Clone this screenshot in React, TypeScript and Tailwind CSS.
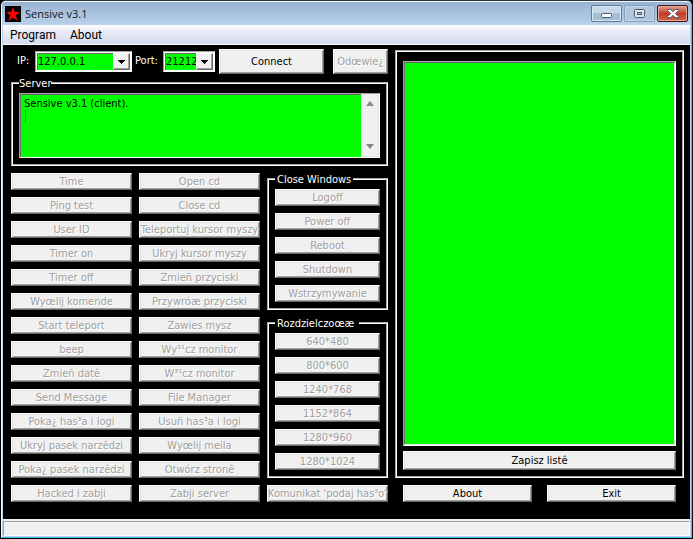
import type { ReactNode } from 'react';

const leftColumn = [
  'Time', 'Ping test', 'User ID', 'Timer on', 'Timer off', 'Wyœlij komende', 'Start teleport',
  'beep', 'Zmieñ datê', 'Send Message', 'Poka¿ has³a i logi', 'Ukryj pasek narzêdzi',
  'Poka¿ pasek narzêdzi', 'Hacked i zabji',
];
const middleColumn = [
  'Open cd', 'Close cd', 'Teleportuj kursor myszy', 'Ukryj kursor myszy', 'Zmieñ przyciski',
  'Przywróæ przyciski', 'Zawies mysz', 'Wy³¹cz monitor', 'W³¹cz monitor', 'File Manager',
  'Usuñ has³a i logi', 'Wyœlij meila', 'Otwórz stronê', 'Zabji server',
];
const closeActions = ['Logoff', 'Power off', 'Reboot', 'Shutdown', 'Wstrzymywanie'];
const resolutions = ['640*480', '800*600', '1240*768', '1152*864', '1280*960', '1280*1024'];

function Btn({ children, className = 'h-[17px]', disabled = false }: { children: ReactNode; className?: string; disabled?: boolean }) {
  return (
    <button
      type="button"
      disabled={disabled}
      className={`flex items-center justify-center whitespace-nowrap border border-t-white border-l-white border-r-[#696969] border-b-[#696969] bg-[#f0f0f0] pt-px leading-[14px] text-black shadow-[inset_1px_1px_#e3e3e3,inset_-1px_-1px_#a0a0a0] disabled:text-[#a0a0a0] disabled:[text-shadow:1px_1px_#fff] ${className}`}
    >
      {children}
    </button>
  );
}

function ButtonColumn({ labels }: { labels: string[] }) {
  return (
    <div className="flex flex-col gap-[7px]">
      {labels.map((label) => (
        <Btn key={label} disabled>{label}</Btn>
      ))}
    </div>
  );
}

function Group({ title, legendClass = 'px-[2px]', children }: { title: string; legendClass?: string; children: ReactNode }) {
  return (
    <fieldset className="min-w-0 border-2 border-white px-1.5 pt-1 pb-1.5 [border-style:groove]">
      <legend className={`h-3 whitespace-pre leading-[14px] text-white ${legendClass}`}>{title}</legend>
      {children}
    </fieldset>
  );
}

const sunken = 'border border-t-[#a0a0a0] border-l-[#a0a0a0] border-r-white border-b-white';

function Combo({ id, value, className }: { id: string; value: string; className: string }) {
  return (
    <div className={`relative flex h-[21px] bg-white p-px ${sunken} ${className}`}>
      <select id={id} defaultValue={value} className="w-full appearance-none border-t border-l border-[#696969] bg-[#00ff00] text-black outline-none">
        <option>{value}</option>
      </select>
      <span className="pointer-events-none absolute top-px right-px flex h-[17px] w-[17px] items-center justify-center border border-t-white border-l-white border-r-[#696969] border-b-[#696969] bg-[#f0f0f0] shadow-[inset_-1px_-1px_#a0a0a0]">
        <svg width="7" height="4" viewBox="0 0 7 4" shapeRendering="crispEdges"><path d="M0 0h7v1H6v1H5v1H4v1H3V3H2V2H1V1H0z" /></svg>
      </span>
    </div>
  );
}

export default function App() {
  return (
    <div className="bg-black font-['DejaVu_Sans_Condensed','DejaVu_Sans',sans-serif] text-[11px]">
      <div className="rounded-t-[6px] border border-t-[#30343c] border-r-[#111] border-b-black border-l-black bg-[#b9d1ea]">
        <div className="rounded-t-[5px] border border-t-[#eef5fc] border-r-[#3cc0ea] border-b-[#3cc0ea] border-l-white">
          <header className="flex h-[23px] items-center rounded-t-[4px] bg-linear-to-b from-[#98b3d2] to-[#bad2eb] px-[3px]">
            <svg width="16" height="16" viewBox="0 0 16 16"><path d="M0 0h16v16H0z" /><path fill="#f00" d="M8 1l1.800 5H15l-4.200 3.300L12.500 15 8 11.500 3.500 15l1.700-5.700L1 6h5.200z" /></svg>
            <h1 className="ml-1 flex-1 font-['Open_Sans','Noto_Sans',sans-serif] text-[11px] leading-4 text-[#101820]">Sensive v3.1</h1>
            <div className="flex gap-[2px]">
              <button type="button" aria-label="Minimize" className="flex h-[17px] w-[31px] items-center justify-center rounded-[2px] border border-[#64798f] bg-linear-to-b from-[#c5d7ea] from-50% to-[#a5bed8] to-50% shadow-[inset_0_0_0_1px_#d9e7f5]">
                <svg width="11" height="5" viewBox="0 0 11 5" className="mt-1"><rect x=".5" y=".5" width="10" height="4" rx="1" fill="#fff" stroke="#535666" /></svg>
              </button>
              <button type="button" aria-label="Maximize" disabled className="flex h-[17px] w-[31px] items-center justify-center rounded-[2px] border border-[#879fba] bg-[#aec6df] shadow-[inset_0_0_0_1px_#c3d6ea]">
                <svg width="11" height="9" viewBox="0 0 11 9"><rect x=".5" y=".5" width="10" height="8" rx="1" fill="#e1e6ee" stroke="#535666" /><rect x="3.500" y="3.500" width="4" height="2" fill="#aec6df" stroke="#535666" /></svg>
              </button>
              <button type="button" aria-label="Close" className="flex h-[17px] w-[31px] items-center justify-center rounded-[2px] border border-[#43131a] bg-linear-to-b from-[#e0a091] via-[#c03c25] via-50% to-[#d3634a] shadow-[inset_0_0_0_1px_#e3a99f]">
                <svg width="12" height="9" viewBox="0 0 12 9"><path d="M.5.5h3.300L6 2.600 8.200.5h3.300v1L8.300 4.500l3.200 3v1H8.200L6 6.400 3.800 8.500H.5v-1l3.200-3-3.200-3z" fill="#fff" stroke="#535666" /></svg>
              </button>
            </div>
          </header>

          <div className="mx-px mb-px bg-black">
            <nav className="flex h-5 items-center gap-3.5 border-b border-white bg-linear-to-b from-white via-[#e6eaf5] via-40% to-[#d5dbee] pl-[7px] font-['Roboto',sans-serif] text-[12px] leading-4 text-black">
              <button type="button">Program</button>
              <button type="button">About</button>
            </nav>

            <main className="flex gap-[7px] pt-1 pr-1.5 pb-[17px] pl-2">
              <div className="w-[377px] shrink-0">
                <div className="flex h-[25px] items-center text-white">
                  <label htmlFor="ip" className="w-6 pl-1.5">IP:</label>
                  <Combo id="ip" value="127.0.0.1" className="w-[97px]" />
                  <label htmlFor="port" className="w-[31px] pl-[3px]">Port:</label>
                  <Combo id="port" value="21212" className="w-[52px]" />
                  <Btn className="ml-1 h-[25px] w-[105px]">Connect</Btn>
                  <Btn disabled className="ml-[9px] h-[25px] w-[55px]">Odœwie¿</Btn>
                </div>

                <div className="mt-[3px]">
                  <Group title="Server" legendClass="">
                    <div className={`relative flex h-[65px] ${sunken}`}>
                      <textarea
                        aria-label="Server log"
                        defaultValue={'Sensive v3.1 (client).\n'}
                        className="min-w-0 flex-1 resize-none overflow-hidden border-t border-l border-[#696969] bg-[#00ff00] px-[3px] pt-[2px] leading-[13px] text-black outline-none"
                      />
                      <span className="absolute top-4 left-[5px] h-[13px] w-px bg-[#a040a0]" />
                      <div className="flex w-[18px] flex-col items-center justify-between border-r border-b border-l border-[#e3e3e3] bg-[#f0f0f0] py-[7px]">
                        <svg width="8" height="5" viewBox="0 0 8 5"><path d="M4 0l4 5H0z" fill="#888" /></svg>
                        <svg width="8" height="5" viewBox="0 0 8 5"><path d="M4 5L0 0h8z" fill="#888" /></svg>
                      </div>
                    </div>
                  </Group>
                </div>

                <div className="mt-[7px] grid grid-cols-[121px_121px_121px] gap-[7px]">
                  <ButtonColumn labels={leftColumn} />
                  <ButtonColumn labels={middleColumn} />
                  <div className="flex flex-col gap-[7px]">
                    <Group title="Close Windows"><ButtonColumn labels={closeActions} /></Group>
                    <Group title="Rozdzielczoœæ "><ButtonColumn labels={resolutions} /></Group>
                    <Btn disabled>Komunikat 'podaj has³o'</Btn>
                  </div>
                </div>
              </div>

              <div className="flex min-w-0 flex-1 flex-col gap-[7px] pt-px">
                <section className="flex flex-1 flex-col gap-[5px] border-2 border-white px-1.5 pt-[9px] pb-1.5 [border-style:groove]">
                  <div className={`flex flex-1 ${sunken}`}>
                    <textarea aria-label="Lista" className="min-w-0 flex-1 resize-none border border-t-[#696969] border-r-[#e3e3e3] border-b-[#e3e3e3] border-l-[#696969] bg-[#00ff00] text-black outline-none" />
                  </div>
                  <Btn className="h-[19px]">Zapisz listê</Btn>
                </section>
                <div className="grid grid-cols-2 gap-[15px] px-2">
                  <Btn>About</Btn>
                  <Btn>Exit</Btn>
                </div>
              </div>
            </main>

            <footer className="h-[17px] bg-[#f0f0f0] pt-[2px]">
              <div className="h-full border border-t-[#a0a0a0] border-r-white border-b-white border-l-[#a0a0a0]" />
            </footer>
          </div>
        </div>
      </div>
    </div>
  );
}
